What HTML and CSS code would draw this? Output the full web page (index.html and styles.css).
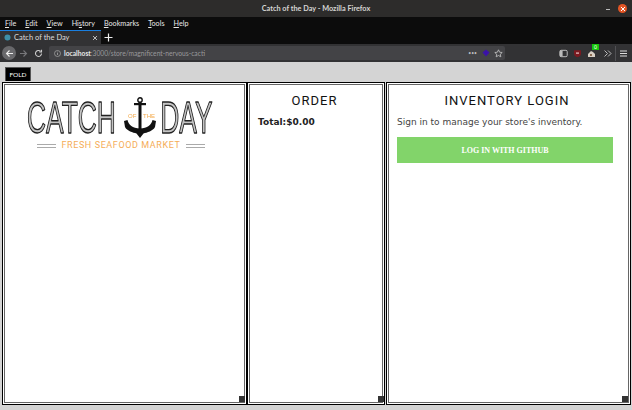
FILE: index.html
```html
<!DOCTYPE html>
<html lang="en">
<head>
<meta charset="utf-8">
<title>Catch of the Day - Mozilla Firefox</title>
<link rel="stylesheet" href="styles.css">
</head>
<body>
<header class="titlebar">
  <span class="title">Catch of the Day - Mozilla Firefox</span>
  <span class="win-min"></span>
  <span class="win-close">
    <svg width="6" height="6" viewBox="0 0 6 6"><path d="M1 1l4 4M5 1l-4 4" stroke="#fff" stroke-width="1"/></svg>
  </span>
</header>
<nav class="menubar">
  <span><u>F</u>ile</span><span><u>E</u>dit</span><span><u>V</u>iew</span><span>Hi<u>s</u>tory</span><span><u>B</u>ookmarks</span><span><u>T</u>ools</span><span><u>H</u>elp</span>
</nav>
<div class="tabbar">
  <div class="tab">
    <svg class="favicon" width="7" height="7" viewBox="0 0 7 7"><circle cx="3.500" cy="3.500" r="3" fill="#3d8fa8"/></svg>
    <span class="tab-label">Catch of the Day</span>
    <svg class="tab-x" width="6" height="6" viewBox="0 0 6 6"><path d="M1 1l4 4M5 1l-4 4" stroke="#bbb" stroke-width="1"/></svg>
  </div>
  <svg class="tab-new" width="9" height="9" viewBox="0 0 9 9"><path d="M4.500 .5v8M.5 4.500h8" stroke="#eee" stroke-width="1.200"/></svg>
</div>
<div class="navbar">
  <span class="back">
    <svg width="9" height="9" viewBox="0 0 9 9"><path d="M8 4.500H1.500M4.500 1.500l-3 3 3 3" fill="none" stroke="#eee" stroke-width="1.100"/></svg>
  </span>
  <svg class="nav-icon" width="9" height="9" viewBox="0 0 9 9"><path d="M1 4.500h6.500M4.500 1.500l3 3-3 3" fill="none" stroke="#77777a" stroke-width="1.100"/></svg>
  <svg class="nav-icon" width="9" height="9" viewBox="0 0 9 9"><path d="M7.500 4.500a3 3 0 1 1-1-2.300M7.500 .8v2.200H5.300" fill="none" stroke="#ccc" stroke-width="1.100"/></svg>
  <div class="urlbar">
    <svg class="info" width="7" height="7" viewBox="0 0 7 7"><circle cx="3.500" cy="3.500" r="3" fill="none" stroke="#aaa" stroke-width=".7"/><path d="M3.500 3v2M3.500 1.700v.7" stroke="#aaa" stroke-width=".8"/></svg>
    <span class="url"><b>localhost</b>:3000/store/magnificent-nervous-cacti</span>
    <span class="dots">•••</span>
    <svg class="ext" width="8" height="8" viewBox="0 0 8 8"><path d="M4 .5L7.500 3.500 4 7.500 .5 3.500z" fill="#3a12a8"/></svg>
    <svg class="star" width="9" height="9" viewBox="0 0 9 9"><path d="M4.500 .8l1.100 2.400 2.600.3-1.900 1.700.5 2.600-2.300-1.300-2.300 1.300.5-2.600L.8 3.500l2.600-.3z" fill="none" stroke="#bbb" stroke-width=".9"/></svg>
  </div>
  <div class="tools">
    <svg width="9" height="9" viewBox="0 0 9 9"><rect x=".8" y="1.300" width="7.400" height="6.400" rx="1.300" fill="none" stroke="#bbb"/><rect x="1" y="1.500" width="2.600" height="6" fill="#bbb"/></svg>
    <svg width="9" height="9" viewBox="0 0 9 9"><path d="M1 1.200h7v3.500c0 2-1.500 3-3.500 3.600C2.500 7.700 1 6.700 1 4.700z" fill="#7b1a20"/><rect x="3" y="3.500" width="3" height="1.200" fill="#e8c8c8"/></svg>
    <span class="badge-wrap">
      <svg width="10" height="10" viewBox="0 0 10 10"><path d="M1 9V6l3-3 2 1 2 2v3z" fill="#d8cfc4"/><rect x="3" y="6" width="2" height="2" fill="#8a6a50"/></svg>
      <span class="badge">0</span>
    </span>
    <svg class="chev" width="9" height="9" viewBox="0 0 9 9"><path d="M1.500 1.500l3 3-3 3M5 1.500l3 3-3 3" fill="none" stroke="#bbb" stroke-width="1"/></svg>
    <span class="sep"></span>
    <svg width="9" height="9" viewBox="0 0 9 9"><path d="M1 2h7M1 4.500h7M1 7h7" stroke="#ddd" stroke-width="1.100"/></svg>
  </div>
</div>
<main class="page">
  <button class="fold">FOLD</button>
  <div class="panels">
    <section class="panel panel-menu">
      <div class="logo">
        <svg class="logo-art" width="188" height="42" viewBox="0 0 188 42">
          <g transform="scale(.6 1)">
            <text class="logo-word" x="0" y="36">CATCH</text>
            <text class="logo-word" x="222" y="36">DAY</text>
          </g>
          <circle cx="113" cy="3" r="2.200" fill="none" stroke="#111" stroke-width="1.400"/>
          <path d="M107 6h12v2.200h-12z" fill="#111"/>
          <path d="M111.500 5h3v31h-3z" fill="#111"/>
          <path d="M97 24l3.500-1c1 5 5 8 12.500 8.500 7.500-.5 11.500-3.500 12.500-8.500l3.500 1-1 6c-2 4-8 5.500-11.500 6.500l-3.500 4.500-3.500-4.500c-3.500-1-9.500-2.500-11.500-6.500z" fill="#111"/>
          <text class="logo-mini" x="101" y="21">OF</text>
          <text class="logo-mini" x="116" y="21">THE</text>
        </svg>
        <div class="tagline"><span class="rule"></span><span>FRESH SEAFOOD MARKET</span><span class="rule"></span></div>
      </div>
      <i class="grip"></i>
    </section>
    <section class="panel panel-order">
      <h2>ORDER</h2>
      <p class="total">Total:$0.00</p>
      <i class="grip"></i>
    </section>
    <section class="panel panel-inv">
      <h2>INVENTORY LOGIN</h2>
      <p class="lead">Sign in to manage your store's inventory.</p>
      <button class="github">LOG IN WITH GITHUB</button>
      <i class="grip"></i>
    </section>
  </div>
</main>
</body>
</html>
```
FILE: styles.css
```css
* { box-sizing: border-box; }
html, body { margin: 0; height: 100%; }
body { width: 632px; height: 410px; overflow: hidden; display: flex; flex-direction: column; font-family: "Lato", sans-serif; background: #d4d4d4; }

.titlebar { height: 17px; background: #2d2c2b; display: flex; align-items: center; justify-content: center; position: relative; }
.title { color: #d6d6d4; font-size: 7.300px; font-weight: 700; }
.win-min { position: absolute; left: 606px; top: 9px; width: 4px; height: 1px; background: #bbb; }
.win-close { position: absolute; left: 618px; top: 4px; width: 9px; height: 9px; border-radius: 50%; background: #e25525; display: flex; align-items: center; justify-content: center; }

.menubar { height: 13px; background: #0c0c0c; display: flex; gap: 9px; padding-left: 5px; align-items: center; color: #e8e8e8; font-size: 7.200px; }
.tabbar { height: 14px; background: #0c0c0c; display: flex; align-items: center; }
.tab { width: 101px; height: 14px; background: #323234; border-top: 1px solid #1a7fe0; display: flex; align-items: center; padding-left: 4px; color: #ddd; font-size: 7.500px; }
.tab-label { margin-left: 3px; flex: 1; }
.tab-x { margin-right: 3px; }
.tab-new { margin-left: 3px; }

.navbar { height: 18px; background: #323234; display: flex; align-items: center; padding-left: 2px; }
.back { width: 14px; height: 14px; border-radius: 50%; background: #68686b; display: flex; align-items: center; justify-content: center; margin-right: 3px; }
.nav-icon { margin-right: 6px; }
.urlbar { width: 456px; height: 14px; border-radius: 2px; background: #434346; display: flex; align-items: center; padding-left: 5px; font-size: 6.700px; color: #99999b; }
.info { margin-right: 3px; }
.url { flex: 1; white-space: nowrap; }
.url b { color: #e6e6e6; font-weight: 700; }
.dots { font-size: 5px; color: #bbb; margin-right: 5px; }
.ext { margin-right: 4px; }
.star { margin-right: 2px; }
.tools { display: flex; align-items: center; gap: 5px; margin-left: 54px; }
.badge-wrap { position: relative; display: flex; }
.badge { position: absolute; left: 5px; top: -4px; width: 7px; height: 6px; background: #16c60c; color: #fff; font-size: 5px; line-height: 6px; text-align: center; }
.chev { margin-left: 1px; }
.sep { width: 1px; height: 15px; background: #505053; margin: 0 -2px; }

.page { flex: 1; min-height: 0; display: flex; flex-direction: column; padding: 5px 1px 5.500px 2px; background: #d4d4d4; }
.fold { align-self: flex-start; margin: 0 0 1px 3px; width: 26px; height: 14px; padding: 0; background: #000; border: 1px solid #555; border-bottom: 0; color: #fff; font: 400 6.500px "Lato", sans-serif; }

.panels { flex: 1; min-height: 0; display: flex; gap: 0; background: #d4d4d4; }
.panel { position: relative; border: 1px solid #000; box-shadow: inset 0 0 0 1px #fff, inset 0 0 0 2px #666; background: #fff; padding: 2px; }
.panel-menu { width: 245px; }
.panel-order { width: 138px; }
.panel-inv { flex: 1; margin-left: 1px; }
.grip { position: absolute; right: 1px; bottom: 2px; width: 6px; height: 6px; background: #333; }
.panel-order .grip { right: 0; }
.panel-inv .grip { right: 2px; }

h2 { margin: 0; padding-right: 3px; text-align: center; font: 400 13px/1 "Roboto", sans-serif; letter-spacing: 1px; color: #111; }
.panel-order h2 { margin-top: 9px; }
.panel-inv h2 { margin-top: 9px; }
.total { margin: 11px 0 0 8px; font: 700 9px/1 "DejaVu Sans", sans-serif; color: #222; }
.lead { margin: 11px 0 0 8px; font: 400 9px/1 "DejaVu Sans", sans-serif; color: #444; }
.github { display: block; margin: 10px 0 0 8px; width: 216px; height: 26px; padding: 0; border: 0; background: #82d46a; color: #fff; font: 700 8px "Liberation Serif", serif; }

.logo { margin: 12px 0 0 22px; width: 188px; display: flex; flex-direction: column; align-items: center; }
.logo-art { will-change: transform; }
.logo-word { font: 400 44px "Liberation Sans", sans-serif; fill: #c4c4c4; stroke: #222; stroke-width: 1.300px; stroke-linejoin: round; }
.logo-mini { font: 400 6px "Liberation Sans", sans-serif; fill: #f3a94b; }
.tagline { display: flex; align-items: center; gap: 5px; margin-top: 2px; font: 400 9px/1 "Roboto", sans-serif; letter-spacing: .6px; color: #f5ad57; }
.rule { width: 19px; height: 4px; border-top: 1px solid #aaa; border-bottom: 1px solid #aaa; }
```
